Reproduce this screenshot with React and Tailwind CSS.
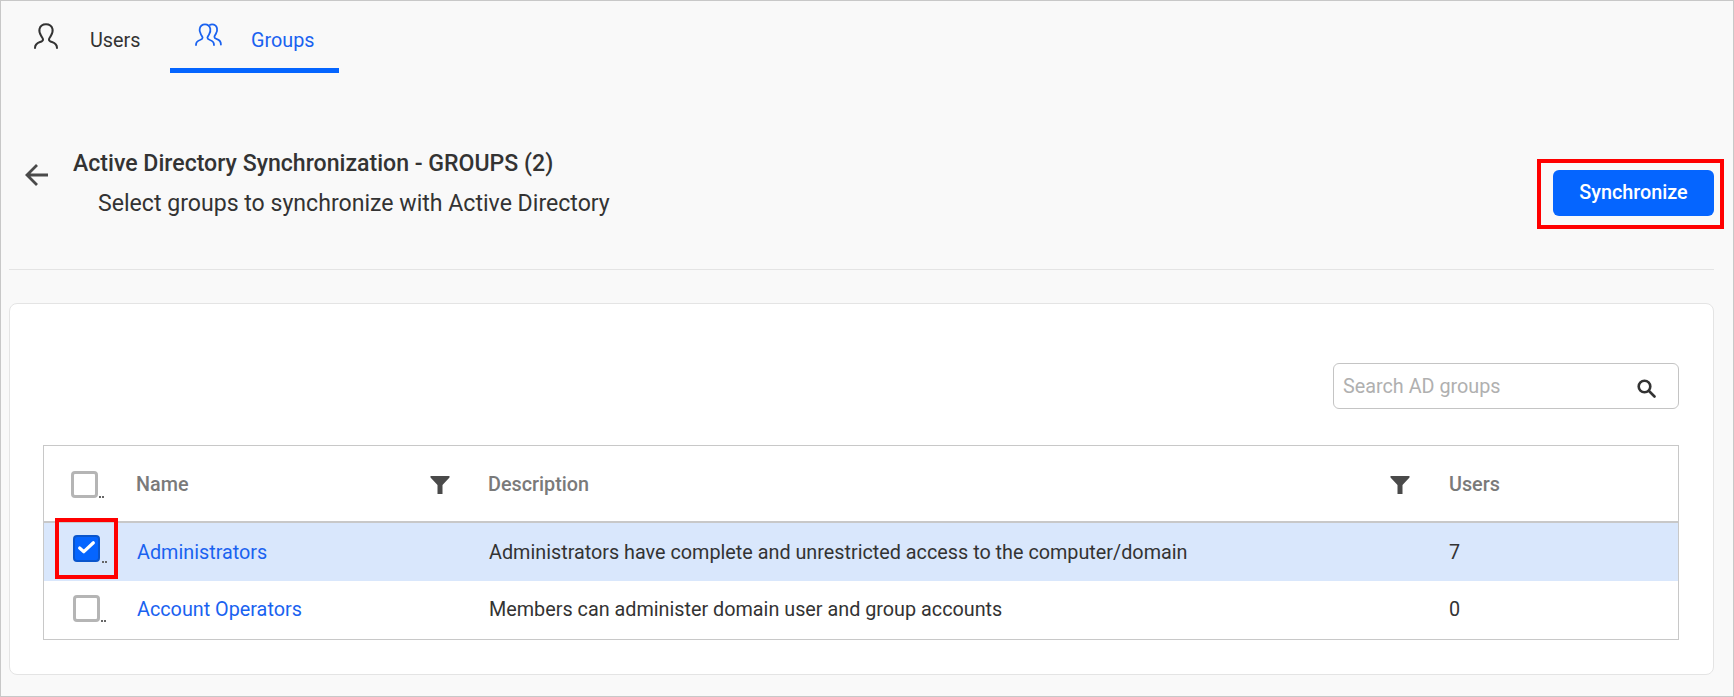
const UserIcon = ({ className }) => (
  <svg className={className} viewBox="0 0 24 26" fill="none" stroke="currentColor" strokeWidth="2" strokeLinecap="round">
    <path d="M1 25c0-3 2-5 5-6 2-.6 3-1.300 3-2.600 0-1-1-2-1.900-3.600C5.500 10 5 8 5.500 6 6.300 2.800 9 1.200 12 1.200s5.700 1.600 6.500 4.800c.5 2 0 4-1.600 6.800-.9 1.600-1.900 2.600-1.900 3.600 0 1.300 1 2 3 2.600 3 1 5 3 5 6" />
  </svg>
)

const GroupIcon = ({ className }) => (
  <svg className={className} viewBox="0 0 27 25" fill="none" stroke="currentColor" strokeWidth="1.800" strokeLinecap="round">
    <path d="M1 22c0-2.600 1.700-4.300 4-5 1.700-.6 2.600-1.200 2.600-2.300 0-.9-.8-1.700-1.600-3.100C4.700 9.300 4.200 7.500 4.700 5.800 5.400 3 7.600 1.400 10 1.400s4.600 1.600 5.300 4.400c.4 1.700 0 3.500-1.300 5.800-.8 1.400-1.600 2.200-1.600 3.100 0 1.100.9 1.700 2.600 2.300 2.300.7 4 2.400 4 5" />
    <path d="M15 1.800c.7-.3 1.400-.4 2-.4 2.500 0 4.400 1.500 5 3.900.4 1.700.1 3.400-1.100 5.500-.8 1.400-1.500 2.200-1.500 3.100 0 1.100 1 1.700 2.600 2.300 2.100.7 3.900 2.400 3.900 5.300" />
  </svg>
)

const FilterIcon = () => (
  <svg className="w-[20px] h-[20px] text-[#4a4a4a]" viewBox="0 0 20 20" fill="currentColor">
    <path d="M.5 1h19v1.500L12.500 10v9h-5v-9L.5 2.500z" />
  </svg>
)

const Dots = () => <span className="absolute right-[-9px] bottom-[-3px] w-[5px] h-[2px] border-x-2 border-[#666]" />

function Checkbox({ checked, className }) {
  return (
    <span className={`relative block w-[27px] h-[27px] rounded-[4px] ${checked ? 'bg-[#0565ff] border-2 border-[#0a55cc]' : 'bg-white border-[3px] border-[#b5b5b5]'} ${className || ''}`}>
      {checked && (
        <svg className="absolute left-[2px] top-[1px] w-[19px] h-[19px] text-white" viewBox="0 0 18 18" fill="none" stroke="currentColor" strokeWidth="3" strokeLinecap="round" strokeLinejoin="round">
          <path d="M2.500 9.500l4 3.500 9-8.500" />
        </svg>
      )}
      <Dots />
    </span>
  )
}

function Row({ selected, name, desc, users }) {
  return (
    <div className={`grid grid-cols-[93px_352px_960px_1fr] items-center h-[58px] text-[19.8px] text-[#333] ${selected ? 'bg-[#d9e7fc] pt-[2px]' : 'bg-white'}`}>
      <div className={`pl-[29px] ${selected ? 'mb-[10px]' : 'mb-[4px]'}`}><Checkbox checked={selected} /></div>
      <a className="text-[#1a62f0]">{name}</a>
      <div>{desc}</div>
      <div>{users}</div>
    </div>
  )
}

export default function App() {
  return (
    <div className="relative w-[1734px] h-[697px] overflow-hidden border border-[#c8c8c8] bg-[#f9f9f9] font-['Roboto',sans-serif]">
      <div className="flex h-[72px]">
        <div className="flex items-start pl-[33px] pt-[22px] w-[169px] text-[#333]">
          <UserIcon className="w-[24px] h-[26px]" />
          <span className="ml-[32px] mt-[6px] text-[19.8px] leading-[24px]">Users</span>
        </div>
        <div className="flex items-start pl-[25px] pt-[22px] w-[169px] h-[72px] border-b-[5px] border-[#0565ff] text-[#1a62f0]">
          <GroupIcon className="w-[27px] h-[25px]" />
          <span className="ml-[29px] mt-[6px] text-[19.8px] leading-[24px]">Groups</span>
        </div>
      </div>

      <div className="flex items-start h-[197px] border-b border-[#e4e4e4] ml-[8px] mr-[19px] mb-[33px] pt-[78px]">
        <svg className="w-[26px] h-[26px] ml-[15px] mt-[11px] text-[#4a4a4a]" viewBox="0 0 26 26" fill="none" stroke="currentColor" strokeWidth="2.800">
          <path d="M24 13H3M13 3L3 13l10 10" />
        </svg>
        <div className="ml-[23px]">
          <div className="text-[23.1px] leading-[26px] font-medium text-[#333]">Active Directory Synchronization - GROUPS (2)</div>
          <div className="ml-[25px] mt-[14px] text-[23.1px] leading-[26px] text-[#333]">Select groups to synchronize with Active Directory</div>
        </div>
        <button className="ml-auto mt-[19px] w-[161px] h-[46px] rounded-[6px] bg-[#0565ff] text-white text-[19.8px] font-medium">Synchronize</button>
      </div>

      <div className="ml-[8px] mr-[19px] h-[372px] rounded-[8px] border border-[#e4e4e4] bg-white pl-[33px] pr-[34px] pt-[59px]">
        <div className="flex justify-end">
          <div className="flex items-center w-[346px] h-[46px] rounded-[6px] border border-[#c4c4c4] pl-[9px] pr-[22px] text-[19.8px] text-[#b0b0b0]">
            <span className="flex-1 pt-[2px]">Search AD groups</span>
            <svg className="w-[19px] h-[19px] text-[#333] mt-[4px]" viewBox="0 0 19 19" fill="none" stroke="currentColor" strokeWidth="2.600" strokeLinecap="round">
              <circle cx="7.500" cy="7.500" r="5.800" />
              <path d="M12 12l5.500 5.500" />
            </svg>
          </div>
        </div>
        <div className="mt-[36px] border border-[#c8c8c8]">
          <div className="grid grid-cols-[92px_352px_961px_1fr] items-center h-[77px] border-b-2 border-[#c8c8c8] pt-[2px] text-[19.8px] font-medium text-[#7a7a7a]">
            <div className="pl-[27px]"><Checkbox /></div>
            <div className="flex items-center justify-between pr-[38px]"><span>Name</span><FilterIcon /></div>
            <div className="flex items-center justify-between pr-[39px]"><span>Description</span><FilterIcon /></div>
            <div>Users</div>
          </div>
          <Row selected name="Administrators" desc="Administrators have complete and unrestricted access to the computer/domain" users="7" />
          <Row name="Account Operators" desc="Members can administer domain user and group accounts" users="0" />
        </div>
      </div>

      {/* red annotation boxes */}
      <div className="absolute left-[1536px] top-[158px] w-[187px] h-[70px] border-4 border-[#f00]" />
      <div className="absolute left-[54px] top-[517px] w-[63px] h-[61px] border-4 border-[#f00]" />
    </div>
  )
}
